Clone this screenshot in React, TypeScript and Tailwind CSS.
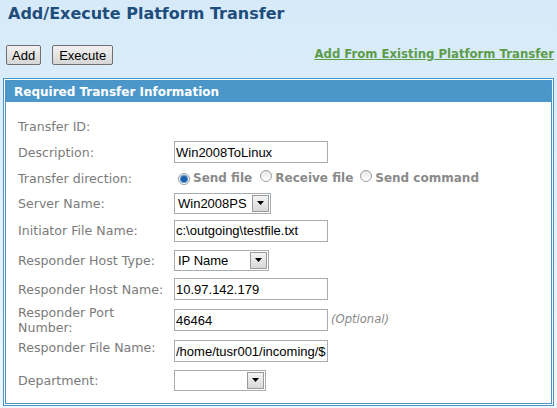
import React from "react";

const V = { fontFamily: '"DejaVu Sans", Verdana, sans-serif' };
const A = { fontFamily: '"Liberation Sans", Arial, sans-serif' };

function Arrow() {
  return (
    <div className="flex h-[17px] w-[17px] items-center justify-center border border-[#9a9a9a] bg-gradient-to-b from-[#f4f4f4] to-[#d8d8d8]">
      <svg width="7" height="4" viewBox="0 0 7 4">
        <polygon points="0,0 7,0 3.5,4" fill="#000" />
      </svg>
    </div>
  );
}

function Select({ w, value }: { w: string; value: string }) {
  return (
    <div className={`flex h-[21px] items-center justify-between border border-[#a5acb2] bg-white pl-[3px] pr-[1px] ${w}`}>
      <span className="text-[13px] leading-none text-black" style={A}>{value}</span>
      <Arrow />
    </div>
  );
}

function Input({ value }: { value: string }) {
  return (
    <div className="flex h-[22px] w-[154px] items-center overflow-hidden whitespace-nowrap border border-[#a5acb2] bg-white pl-[1px]">
      <span className="text-[13px] leading-none text-black" style={A}>{value}</span>
    </div>
  );
}

function Radio({ checked }: { checked?: boolean }) {
  return (
    <span className="relative inline-flex h-[12px] w-[12px] items-center justify-center rounded-full border border-[#9aa0a6] bg-gradient-to-b from-[#e6e6e6] to-[#ffffff]">
      {checked && <span className="h-[6px] w-[6px] rounded-full bg-[#1d5fa8] ring-1 ring-[#5a8fd0]" />}
    </span>
  );
}

function Row({ h, label, children, top }: { h: string; label: React.ReactNode; children?: React.ReactNode; top?: boolean }) {
  return (
    <div className={`flex ${top ? "items-start pt-[4px]" : "items-center"} ${h}`}>
      <div className="w-[156px] text-[12.6px] leading-[15px] text-[#7b7b7b]" style={V}>{label}</div>
      <div className="flex items-center">{children}</div>
    </div>
  );
}

export default function App() {
  return (
    <div className="flex h-[408px] w-[557px] flex-col bg-gradient-to-b from-[#d6eaf9] to-[#eef7fd]">
      <div className="pl-[8px] pt-[3px] text-[16px] font-bold leading-[22px] text-[#1f4d7c]" style={V}>
        Add/Execute Platform Transfer
      </div>
      <div className="mt-[20px] flex items-center justify-between pl-[6px] pr-[3px]">
        <div className="flex gap-[11px]">
          <button className="h-[20px] rounded-[2px] border border-[#707070] bg-gradient-to-b from-[#f2f2f2] to-[#d6d6d6] px-[5px] text-[13px] leading-none text-black" style={A}>Add</button>
          <button className="h-[20px] rounded-[2px] border border-[#707070] bg-gradient-to-b from-[#f2f2f2] to-[#d6d6d6] px-[6px] text-[13px] leading-none text-black" style={A}>Execute</button>
        </div>
        <a className="text-[11.7px] font-bold text-[#5d9c4a] underline" style={V}>Add From Existing Platform Transfer</a>
      </div>
      <div className="ml-[3px] mt-[13px] w-[551px] border border-[#4a93c9] bg-white p-[1px]">
        <div className="border border-[#4a93c9]">
          <div className="flex h-[21px] items-center bg-[#4b97ca] pl-[8px] text-[12px] font-bold text-white" style={V}>
            Required Transfer Information
          </div>
          <div className="flex flex-col pl-[12px] pt-[11px] pb-[9px]">
            <Row h="h-[26px]" label="Transfer ID:" />
            <Row h="h-[26px]" label="Description:"><Input value="Win2008ToLinux" /></Row>
            <Row h="h-[26px]" label="Transfer direction:">
              <div className="flex items-center text-[12px] font-bold text-[#8a8a8a]" style={V}>
                <span className="ml-[4px] mr-[3px]"><Radio checked /></span>Send file
                <span className="ml-[8px] mr-[3px]"><Radio /></span>Receive file
                <span className="ml-[7px] mr-[3px]"><Radio /></span>Send command
              </div>
            </Row>
            <Row h="h-[24px]" label="Server Name:"><Select w="w-[97px]" value="Win2008PS" /></Row>
            <Row h="h-[31px]" label="Initiator File Name:"><Input value="c:\outgoing\testfile.txt" /></Row>
            <Row h="h-[28px]" label="Responder Host Type:"><Select w="w-[95px]" value="IP Name" /></Row>
            <Row h="h-[30px]" label="Responder Host Name:"><Input value="10.97.142.179" /></Row>
            <Row h="h-[32px]" label={<>Responder Port<br />Number:</>}>
              <Input value="46464" />
              <span className="ml-[3px] text-[11.6px] italic text-[#8a8a8a]" style={V}>(Optional)</span>
            </Row>
            <Row h="h-[30px]" label="Responder File Name:" top>
              <Input value="/home/tusr001/incoming/$" />
            </Row>
            <Row h="h-[28px]" label="Department:"><Select w="w-[92px]" value="" /></Row>
          </div>
        </div>
      </div>
    </div>
  );
}
